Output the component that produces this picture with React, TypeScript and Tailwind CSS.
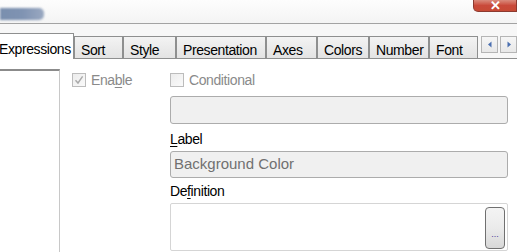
import React from 'react';

const tabs = [
    { name: 'Sort', w: 49 },
    { name: 'Style', w: 53 },
    { name: 'Presentation', w: 90 },
    { name: 'Axes', w: 51 },
    { name: 'Colors', w: 52 },
    { name: 'Number', w: 60 },
    { name: 'Font', w: 49 },
];

const CheckBox: React.FC<{ checked?: boolean }> = ({ checked }) => (
    <span className="w-[14px] h-[14px] border border-[#bcbcbc] bg-gradient-to-br from-[#ececec] to-[#fafafa] flex items-center justify-center shrink-0">
        {checked && (
            <svg width="10" height="10" viewBox="0 0 10 10">
                <path d="M1.5 5.2 L4 8 L8.6 1.4" fill="none" stroke="#a9a9a9" strokeWidth="1.4" />
            </svg>
        )}
    </span>
);

const App: React.FC = () => {
    return (
        <div
            className="w-[517px] h-[252px] overflow-hidden bg-white text-[14px] tracking-[-0.4px] text-black flex flex-col"
            style={{ fontFamily: '"Liberation Sans", Arial, sans-serif' }}
        >
            {/* title strip */}
            <div className="h-[23px] flex justify-between bg-gradient-to-b from-[#fdfdfd] to-[#f4f4f4] shrink-0">
                <div className="mt-[8px] w-[44px] h-[12px] bg-gradient-to-r from-[#7a8fae] via-[#7f93b2] to-[#9aa9c1] blur-[1px] rounded-r-[5px]" />
                <div className="w-[44px] h-[12px] rounded-bl-[5px] border border-t-0 border-[#8c3a30] bg-gradient-to-b from-[#d98a7c] via-[#c9493a] to-[#c64a35] flex items-end justify-center overflow-hidden">
                    <span className="text-white font-bold text-[13px] leading-[10px] tracking-normal">✕</span>
                </div>
            </div>
            <div className="h-px bg-[#a3a3a3] shrink-0" />

            {/* tab row */}
            <div className="h-[35px] flex items-end bg-[#f7f7f7] shrink-0 relative">
                <div className="absolute left-0 right-0 bottom-0 h-px bg-[#8e8f8f]" />
                <div className="relative z-10 w-[77px] h-[26px] -ml-[1px] bg-white border border-b-0 border-[#8e8f8f] flex items-start pt-[5px]">
                    <span className="-ml-[1px]">Expressions</span>
                </div>
                {tabs.map((t) => (
                    <div
                        key={t.name}
                        style={{ width: t.w }}
                        className="h-[23px] border border-[#8e8f8f] bg-gradient-to-b from-[#f3f3f3] to-[#e3e3e3] pt-[3px] pl-[6px] whitespace-nowrap shrink-0"
                    >
                        {t.name}
                    </div>
                ))}
                <div className="flex self-start mt-[12px] ml-[3px] gap-[2px]">
                    <div className="w-[17px] h-[17px] border border-[#b5b5b5] bg-gradient-to-b from-[#f6f6f6] to-[#e8e8e8] flex items-center justify-center">
                        <svg width="6" height="7" viewBox="0 0 6 7"><path d="M4.5 0.5 L1 3.5 L4.5 6.5 Z" fill="#4a6fb0" /></svg>
                    </div>
                    <div className="w-[17px] h-[17px] border border-[#b5b5b5] bg-gradient-to-b from-[#f6f6f6] to-[#e8e8e8] flex items-center justify-center">
                        <svg width="6" height="7" viewBox="0 0 6 7"><path d="M1.5 0.5 L5 3.5 L1.5 6.5 Z" fill="#4a6fb0" /></svg>
                    </div>
                </div>
            </div>

            {/* content */}
            <div className="flex flex-1 bg-white">
                <div className="w-[60px] mt-[10px] border-t-2 border-t-[#8b8b8b] border-r border-r-[#c8c8c8] shrink-0" />

                <div className="w-[110px] pl-[12px] pt-[14px] shrink-0">
                    <div className="flex items-center gap-[5px] text-[#8a8a8a]">
                        <CheckBox checked />
                        <span className="leading-[14px]">
                            Ena<span className="underline underline-offset-2">b</span>le
                        </span>
                    </div>
                </div>

                <div className="w-[338px] pt-[14px] flex flex-col">
                    <div className="flex items-center gap-[5px] text-[#8a8a8a]">
                        <CheckBox />
                        <span className="leading-[14px]">Conditional</span>
                    </div>
                    <div className="mt-[9px] h-[28px] rounded-[3px] border border-[#acacac] bg-[#f0f0f0]" />
                    <div className="mt-[5px] h-[20px] leading-[20px]">
                        <span className="underline underline-offset-2">L</span>abel
                    </div>
                    <div className="mt-[2px] h-[27px] rounded-[3px] border border-[#acacac] bg-[#f0f0f0] pl-[3px] flex items-center text-[15px] text-[#707070] tracking-[0px]">
                        Background Color
                    </div>
                    <div className="mt-[3px] h-[20px] leading-[20px]">
                        De<span className="underline underline-offset-2">f</span>inition
                    </div>
                    <div className="mt-[2px] h-[48px] rounded-[2px] border border-[#d5d5d5] bg-white flex justify-end items-start pt-[3px] pr-[2px]">
                        <div className="w-[20px] h-[42px] rounded-[4px] border border-[#707070] bg-gradient-to-b from-[#f4f4f4] via-[#ebebeb] to-[#d8d8d8] flex items-end justify-center pb-[9px]">
                            <span className="text-[9px] leading-[9px] tracking-[0px] text-[#4a3b9a]">...</span>
                        </div>
                    </div>
                </div>
            </div>
        </div>
    );
};

export default App;
